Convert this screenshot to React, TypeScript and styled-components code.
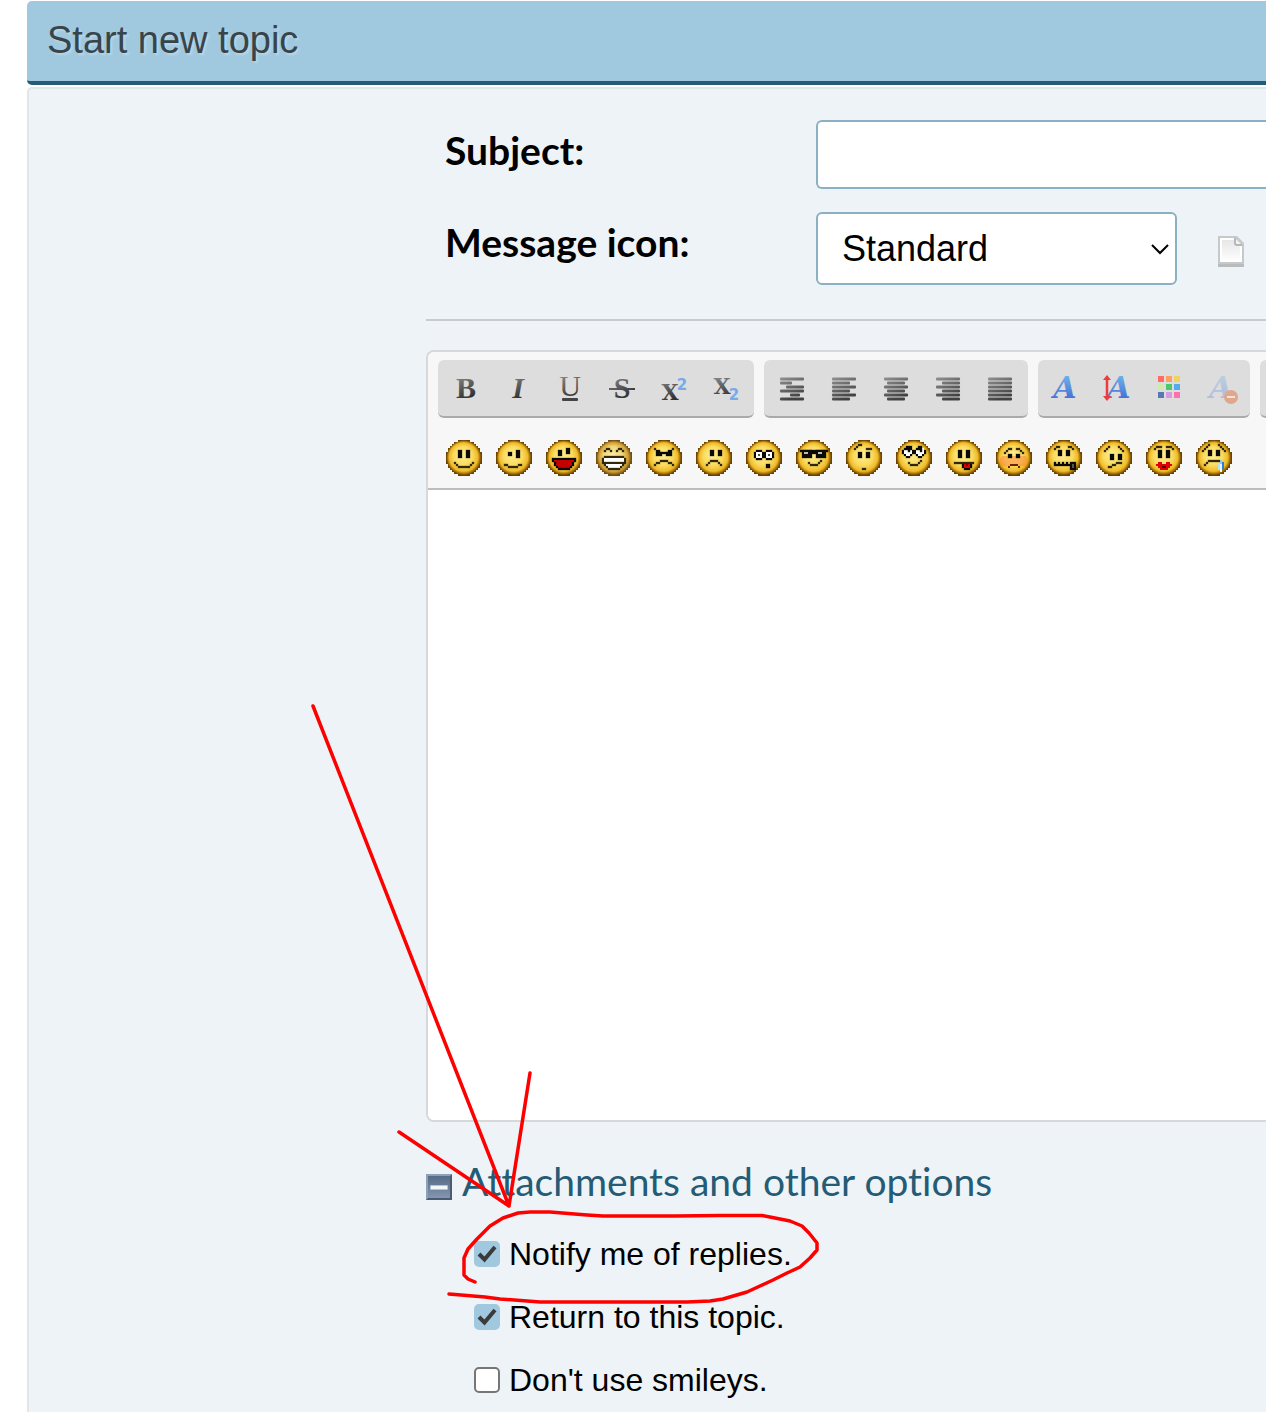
import React from "react";
import styled, { createGlobalStyle } from "styled-components";

const sans = `"Liberation Sans", Arial, sans-serif`;
const rounded = `Lato, "Open Sans", sans-serif`;

const GlobalStyle = createGlobalStyle`
  *, *::before, *::after { box-sizing: border-box; }
  body { margin: 0; background: #fff; color: #000; font-family: ${sans}; }
`;

const Page = styled.main`
  position: relative;
  display: flex;
  flex-direction: column;
  min-height: 100vh;
  padding: 1px 0 0 27px;
  overflow: hidden;
`;

const TitleBar = styled.header`
  padding: 14px 20px 16px;
  background: #a0c9df;
  border-bottom: 4px solid #245b75;
  border-radius: 5px 0 0 5px;
`;

const Title = styled.h1`
  margin: 0;
  font-size: 38px;
  font-weight: 400;
  line-height: 50px;
  color: #39444a;
  text-shadow: 2px 2px 2px rgba(255, 255, 255, 0.25);
`;

const Panel = styled.form`
  flex: 1;
  margin-top: 2px;
  padding: 31px 0 0 397px;
  background: #edf3f6;
  border: 2px solid #dfe7eb;
  border-width: 2px 0 0 2px;
  border-radius: 5px 0 0 0;
`;

const Fields = styled.div`
  display: grid;
  grid-template-columns: 371px 1fr;
  row-gap: 23px;
  padding-left: 19px;
`;

const FieldLabel = styled.label`
  font: 700 39px/60px ${rounded};
  font-variant-ligatures: none;
`;

const SubjectInput = styled.input`
  width: 100%;
  height: 69px;
  padding: 0 24px;
  font: 36px ${sans};
  background: #fff;
  border: 2px solid #8bb0c4;
  border-right: 0;
  border-radius: 6px 0 0 6px;
`;

const IconChoice = styled.div`
  display: flex;
  align-items: center;
  gap: 40px;

  > svg { margin-top: 4px; }
`;

const SelectBox = styled.div`
  display: grid;
  width: 361px;
  align-items: center;

  > * { grid-area: 1 / 1; }
  > svg { justify-self: end; margin-right: 7px; pointer-events: none; }
`;

const Select = styled.select`
  appearance: none;
  width: 100%;
  height: 73px;
  padding: 0 24px;
  font: 36px ${sans};
  color: #000;
  background: #fff;
  border: 2px solid #8bb0c4;
  border-radius: 6px;
`;

const Divider = styled.hr`
  height: 2px;
  margin: 34px 0 29px;
  border: 0;
  background: #c9cbcc;
`;

const Editor = styled.section`
  background: #fff;
  border: 2px solid #d6d8d9;
  border-right: 0;
  border-radius: 8px 0 0 8px;
  overflow: hidden;
`;

const Toolbar = styled.div`
  padding: 8px 0 12px 10px;
  background: #f7f7f7;
  border-bottom: 2px solid #bdbdbd;
`;

const ButtonGroups = styled.div`
  display: flex;
  gap: 10px;
  margin-bottom: 22px;
`;

const ButtonGroup = styled.div`
  display: flex;
  flex: none;
  min-width: 56px;
  height: 58px;
  padding: 0 2px;
  background: #ddd;
  border-bottom: 2px solid #aaa;
  border-radius: 6px;
`;

const ToolButton = styled.button`
  display: grid;
  place-items: center;
  width: 52px;
  height: 56px;
  padding: 0;
  border: 0;
  background: none;
`;

const Smileys = styled.div`
  display: flex;
  gap: 14px;
  padding-left: 8px;
`;

const SmileyButton = styled.button`
  display: block;
  width: 36px;
  height: 36px;
  padding: 0;
  border: 0;
  background: none;
`;

const Message = styled.textarea`
  display: block;
  width: 100%;
  height: 630px;
  padding: 12px;
  border: 0;
  outline: 0;
  resize: none;
  font: 32px ${sans};
  background: #fff;
`;

const OptionsHeading = styled.h2`
  display: flex;
  align-items: flex-end;
  gap: 10px;
  margin: 34px 0 17px;
  font: 400 39px/50px ${rounded};
  font-variant-ligatures: none;

  svg { flex: none; margin-bottom: 6px; }
`;

const OptionsLink = styled.a`
  color: #245b75;
  text-decoration: none;
`;

const Options = styled.div`
  padding-left: 48px;
`;

const Option = styled.label`
  display: flex;
  align-items: center;
  gap: 9px;
  height: 63px;
  font-size: 32px;
`;

const Tick = styled.span`
  display: grid;
  margin-bottom: 2px;

  > * { grid-area: 1 / 1; }
  > svg { pointer-events: none; visibility: hidden; }
  > input:checked + svg { visibility: visible; }
`;

const Checkbox = styled.input`
  appearance: none;
  width: 26px;
  height: 26px;
  margin: 0;
  background: #fff;
  border: 2px solid #767676;
  border-radius: 5px;

  &:checked { background: #a0c9df; border-color: #a0c9df; }
`;

const Annotation = styled.svg`
  position: absolute;
  top: 0;
  left: 0;
  pointer-events: none;
`;

/* ---------- smileys: 18 x 18 pixel art ---------- */

// column, row, width, height, colour (near-black when left out)
type Px = [number, number, number, number, string?];

const INK = "#0c0a04";
const LINE = "#33270a";

const smile: Px[] = [[4, 11, 1, 1, LINE], [13, 11, 1, 1, LINE], [5, 12, 1, 1, LINE], [12, 12, 1, 1, LINE], [6, 13, 6, 1, LINE]];
const grin: Px[] = [[6, 11, 1, 1, LINE], [7, 12, 4, 1, LINE], [11, 11, 1, 1, LINE], [12, 10, 1, 1, LINE]];
const eyes = (x: number, y: number, h: number): Px[] => [[x, y, 2, h], [x + 4, y, 2, h]];

const smileys: { name: string; px: Px[]; blush?: boolean; pale?: boolean }[] = [
  { name: "Smiley", px: [...eyes(6, 5, 4), ...smile] },
  { name: "Wink", px: [[6, 6, 2, 2], [10, 5, 2, 4], [4, 12, 1, 1, LINE], [5, 12, 1, 1, LINE], [6, 13, 5, 1, LINE], [11, 12, 2, 1, LINE]] },
  { name: "Cheesy", px: [[6, 5, 2, 3], [10, 4, 2, 3], [3, 9, 12, 1], [3, 10, 1, 1], [14, 10, 1, 1], [4, 10, 10, 2, "#c40000"], [4, 11, 1, 2], [13, 11, 1, 2], [5, 12, 8, 2, "#c40000"], [5, 13, 1, 1], [12, 13, 1, 1], [6, 14, 6, 1]] },
  { name: "Grin", pale: true, px: [[4, 5, 1, 1, LINE], [5, 4, 2, 1, LINE], [7, 5, 1, 1, LINE], [10, 5, 1, 1, LINE], [11, 4, 2, 1, LINE], [13, 5, 1, 1, LINE], [4, 8, 10, 1, LINE], [3, 9, 1, 3, LINE], [14, 9, 1, 3, LINE], [4, 9, 10, 2, "#fff"], [4, 11, 10, 1, LINE], [4, 12, 1, 1, LINE], [13, 12, 1, 1, LINE], [5, 12, 8, 1, "#fff"], [5, 13, 1, 1, LINE], [12, 13, 1, 1, LINE], [6, 13, 6, 1, "#fff"], [6, 14, 6, 1, LINE]] },
  { name: "Angry", px: [[4, 4, 1, 1, LINE], [5, 5, 2, 1], [11, 5, 2, 1], [13, 4, 1, 1, LINE], [7, 6, 4, 1], [5, 6, 3, 2], [10, 6, 3, 2], [7, 10, 4, 1, LINE], [5, 11, 2, 1, LINE], [11, 11, 2, 1, LINE], [4, 12, 1, 1, LINE], [13, 12, 1, 1, LINE]] },
  { name: "Sad", px: [...eyes(7, 5, 3), [7, 10, 4, 1, LINE], [6, 11, 1, 1, LINE], [11, 11, 1, 1, LINE], [5, 12, 1, 1, LINE], [12, 12, 1, 1, LINE]] },
  { name: "Shocked", px: [[5, 5, 3, 1], [4, 6, 1, 3], [5, 9, 3, 1], [8, 6, 2, 3], [10, 5, 3, 1], [13, 6, 1, 3], [10, 9, 3, 1], [5, 6, 3, 3, "#fff"], [10, 6, 3, 3, "#fff"], [6, 7, 1, 1, "#555"], [11, 7, 1, 1, "#555"], [10, 12, 2, 2]] },
  { name: "Cool", px: [[2, 5, 14, 1], [3, 5, 5, 4], [10, 5, 5, 4], [8, 6, 2, 1], [4, 6, 2, 1, "#bbb"], [11, 6, 2, 1, "#bbb"], ...grin] },
  { name: "Huh?", px: [[4, 4, 1, 1, LINE], [5, 3, 1, 1, LINE], [6, 2, 2, 1, LINE], [10, 4, 3, 1, LINE], ...eyes(6, 6, 3), [8, 14, 2, 1, LINE]] },
  { name: "Roll Eyes", px: [[3, 5, 1, 2], [4, 7, 1, 1], [5, 8, 2, 1], [7, 7, 1, 1], [8, 5, 2, 2], [10, 7, 1, 1], [11, 8, 2, 1], [13, 7, 1, 1], [14, 5, 1, 2], [4, 4, 4, 3, "#fff"], [5, 7, 2, 1, "#fff"], [10, 4, 4, 3, "#fff"], [11, 7, 2, 1, "#fff"], [5, 3, 3, 2], [6, 5, 1, 1], [4, 4, 1, 1], [11, 3, 2, 2], [12, 5, 1, 1], [10, 4, 1, 1], ...grin] },
  { name: "Tongue", px: [...eyes(6, 5, 4), [4, 11, 10, 1, LINE], [8, 12, 5, 2], [9, 14, 3, 1], [9, 12, 3, 2, "#d80000"], [10, 12, 1, 1, "#700"]] },
  { name: "Embarrassed", blush: true, px: [[4, 6, 1, 1, LINE], [5, 5, 1, 1, LINE], [6, 4, 2, 1, LINE], [10, 4, 2, 1, LINE], [12, 5, 1, 1, LINE], [13, 6, 1, 1, LINE], ...eyes(6, 7, 2), [7, 12, 4, 1, "#6b2408"], [6, 13, 1, 1, "#6b2408"], [11, 13, 1, 1, "#6b2408"]] },
  { name: "Lips Sealed", px: [[4, 4, 1, 1, LINE], [5, 3, 2, 1, LINE], [11, 3, 2, 1, LINE], [13, 4, 1, 1, LINE], ...eyes(6, 5, 3), [4, 11, 1, 1], [6, 11, 1, 1], [8, 11, 1, 1], [10, 11, 1, 1], [4, 12, 9, 1], [12, 11, 3, 4], [13, 12, 1, 2, "#555"]] },
  { name: "Undecided", px: [[4, 5, 1, 1, LINE], [5, 4, 1, 1, LINE], [6, 3, 1, 1, LINE], [11, 3, 1, 1, LINE], [12, 4, 1, 1, LINE], [13, 5, 1, 1, LINE], ...eyes(7, 7, 3), [6, 13, 2, 1, LINE], [8, 12, 2, 1, LINE], [10, 11, 3, 1, LINE]] },
  { name: "Kiss", px: [[5, 3, 3, 1, LINE], [4, 4, 1, 1, LINE], [10, 3, 3, 1, LINE], [13, 4, 1, 1, LINE], ...eyes(6, 5, 4), [6, 11, 2, 1, "#e00000"], [10, 11, 2, 1, "#e00000"], [5, 12, 8, 1, "#e00000"], [6, 13, 6, 1, "#e00000"], [8, 13, 2, 1, "#500"], [7, 14, 4, 1, "#e00000"]] },
  { name: "Cry", px: [[3, 5, 1, 1, LINE], [4, 4, 1, 1, LINE], [5, 3, 1, 1, LINE], [6, 2, 1, 1, LINE], [11, 2, 1, 1, LINE], [12, 3, 1, 1, LINE], [13, 4, 1, 1, LINE], [14, 5, 1, 1, LINE], ...eyes(6, 5, 3), [6, 10, 6, 1, LINE], [5, 11, 1, 1, LINE], [4, 12, 1, 1, LINE], [12, 10, 1, 2, "#8cc8f4"], [11, 12, 1, 3, "#b8e0fa"], [12, 12, 1, 4, "#e8f6ff"], [13, 11, 1, 4, "#2a7fd8"]] },
];

// first column of the disc for each of its nine upper rows; the lower half mirrors it
const insets = [6, 4, 3, 2, 1, 1, 0, 0, 0];
const discRows = [...insets, ...[...insets].reverse()];
const discPath = discRows.map((x, y) => `M${x} ${y}h${18 - 2 * x}v1h-${18 - 2 * x}z`).join("");

const Smiley = ({ px, blush, pale }: { px: Px[]; blush?: boolean; pale?: boolean }) => (
  <svg width="36" height="36" viewBox="0 0 18 18" shapeRendering="crispEdges" aria-hidden="true">
    <path d={discPath} fill={pale ? "url(#facePale)" : "url(#face)"} />
    {blush && <rect x="2" y="8" width="14" height="5" rx="2" fill="#ff7a3c" opacity="0.45" />}
    {px.map(([x, y, w, h, c], i) => (
      <rect key={i} x={x} y={y} width={w} height={h} fill={c ?? INK} stroke={c && c !== LINE ? "none" : c ?? INK} strokeWidth="0.3" strokeOpacity="0.5" shapeRendering="auto" />
    ))}
  </svg>
);

const Gradients = () => (
  <svg width="0" height="0" style={{ position: "absolute" }} aria-hidden="true">
    <defs>
      <radialGradient id="face" gradientUnits="userSpaceOnUse" cx="9" cy="9" r="9.4" fx="8" fy="7">
        <stop offset="0" stopColor="#ffee94" />
        <stop offset="0.5" stopColor="#fadb60" />
        <stop offset="0.76" stopColor="#eebb28" />
        <stop offset="0.85" stopColor="#b07a0c" />
        <stop offset="0.93" stopColor="#6a4300" />
      </radialGradient>
      <radialGradient id="facePale" gradientUnits="userSpaceOnUse" cx="9" cy="9" r="9.4" fx="8" fy="7">
        <stop offset="0" stopColor="#fbeaa6" />
        <stop offset="0.5" stopColor="#f3d878" />
        <stop offset="0.78" stopColor="#cf9f36" />
        <stop offset="0.93" stopColor="#714d12" />
      </radialGradient>
      <linearGradient id="ink" gradientUnits="userSpaceOnUse" x1="4" y1="5" x2="14" y2="28">
        <stop offset="0" stopColor="#8a8a8a" />
        <stop offset="1" stopColor="#303030" />
      </linearGradient>
      <linearGradient id="blue" gradientUnits="userSpaceOnUse" x1="0" y1="4" x2="0" y2="27">
        <stop offset="0" stopColor="#6cb0e8" />
        <stop offset="1" stopColor="#466fd6" />
      </linearGradient>
    </defs>
  </svg>
);

/* ---------- toolbar icons: 32 x 32 drawing with a 6 unit margin ---------- */

const Glyph = styled.text<{ $size: number; $bold?: boolean; $italic?: boolean; $fill?: string; $wide?: boolean; $plain?: boolean }>`
  font-family: ${(p) =>
    p.$plain ? `"DejaVu Sans", sans-serif` : p.$wide ? `"DejaVu Serif", serif` : `"Liberation Serif", "Times New Roman", serif`};
  font-size: ${(p) => p.$size}px;
  font-weight: ${(p) => (p.$bold ? 700 : 400)};
  font-style: ${(p) => (p.$italic ? "italic" : "normal")};
  fill: ${(p) => p.$fill ?? "url(#ink)"};
  text-anchor: middle;
`;

const BlueA = ({ x }: { x: number }) => (
  <Glyph x={x} y="26" $size={30} $bold $italic $wide $fill="url(#blue)">A</Glyph>
);

const Lines = ({ rows }: { rows: [number, number][] }) => (
  <>
    {rows.map(([from, to], i) => (
      <rect key={i} x={4 + from} y={5.5 + i * 4} width={to - from} height="3" rx="1" fill="url(#ink)" opacity="0.9" />
    ))}
  </>
);

const full: [number, number] = [0, 24];
const palette = ["#ff6c66", "#ff9f62", "#f0d35c", "#cdeab0", "#4ac96c", "#56aaee", "#5879b2", "#d59ce2", "#ff70ae"];

const groups: { name: string; icon: React.ReactNode }[][] = [
  [
    { name: "Bold", icon: <Glyph x="16" y="26" $size={30} $bold>B</Glyph> },
    { name: "Italic", icon: <Glyph x="16" y="26" $size={30} $bold $italic>I</Glyph> },
    { name: "Underline", icon: <><Glyph x="16" y="24" $size={30}>U</Glyph><rect x="8" y="26" width="16" height="3" rx="1" fill="#444" /></> },
    { name: "Strikethrough", icon: <><Glyph x="16" y="26" $size={30} $bold>S</Glyph><rect x="3" y="16" width="26" height="2" fill="url(#ink)" /></> },
    { name: "Superscript", icon: <><Glyph x="12" y="28" $size={22} $bold $wide>X</Glyph><Glyph x="24" y="18" $size={15} $bold $plain $fill="#7aa9ea">2</Glyph></> },
    { name: "Subscript", icon: <><Glyph x="12" y="22" $size={22} $bold $wide>X</Glyph><Glyph x="24" y="28" $size={15} $bold $plain $fill="#7aa9ea">2</Glyph></> },
  ],
  [
    { name: "Preformatted text", icon: <Lines rows={[full, [0, 12], [6, 24], full, [10, 20], full]} /> },
    { name: "Left align", icon: <Lines rows={[full, [0, 18], full, [0, 18], full, [0, 18]]} /> },
    { name: "Centered", icon: <Lines rows={[full, [3, 21], full, [3, 21], full, [3, 21]]} /> },
    { name: "Right align", icon: <Lines rows={[full, [6, 24], full, [6, 24], full, [6, 24]]} /> },
    { name: "Justify", icon: <Lines rows={[full, full, full, full, full, full]} /> },
  ],
  [
    { name: "Font name", icon: <BlueA x={15} /> },
    {
      name: "Font size",
      icon: (
        <>
          <BlueA x={17} />
          <path d="M5 6v20" stroke="#ee3b3b" strokeWidth="2.5" />
          <path d="M1 8l4-5 4 5zM1 24l4 5 4-5z" fill="#ee3b3b" />
        </>
      ),
    },
    {
      name: "Font color",
      icon: palette.map((c, i) => <rect key={c} x={4 + (i % 3) * 8} y={4 + Math.floor(i / 3) * 8} width="6" height="6" fill={c} />),
    },
    {
      name: "Remove formatting",
      icon: (
        <>
          <g opacity="0.3"><BlueA x={15} /></g>
          <circle cx="25" cy="25" r="7" fill="#dfa88d" />
          <rect x="21" y="24" width="8" height="2" fill="#f6e4da" />
        </>
      ),
    },
  ],
];

const PageIcon = () => (
  <svg width="28" height="34" viewBox="0 0 28 34" role="img" aria-label="Standard message icon">
    <defs>
      <linearGradient id="sheet" x1="0" y1="0" x2="0" y2="1">
        <stop offset="0" stopColor="#e6e6e6" />
        <stop offset="1" stopColor="#fdfdfd" />
      </linearGradient>
    </defs>
    <path d="M1 3h19l7 8v22H1z" fill="#b9bcbd" />
    <path d="M1 2h19l7 7v21H1z" fill="#c6c9ca" />
    <path d="M3 4h16l6 6v18H3z" fill="#fff" />
    <path d="M5 6h12l6 7v13H5z" fill="url(#sheet)" />
    <path d="M17 4h2l6 6v2h-5q-3 0-3-3z" fill="#b4b7b8" />
    <path d="M19 5l5 5h-4q-1 0-1-1z" fill="#f4f4f4" />
  </svg>
);

const CollapseIcon = () => (
  <svg width="26" height="26" viewBox="0 0 26 26" aria-hidden="true">
    <defs>
      <linearGradient id="tile" x1="0" y1="0" x2="0" y2="1">
        <stop offset="0" stopColor="#566b85" />
        <stop offset="1" stopColor="#8496b0" />
      </linearGradient>
    </defs>
    <rect width="26" height="26" fill="#8fa0b6" />
    <path d="M26 0v26H0l2-2h22V2z" fill="#4a5a70" />
    <rect x="2" y="2" width="22" height="22" fill="url(#tile)" />
    <rect x="4" y="11" width="18" height="5" rx="1" fill="#b4c4d8" />
    <rect x="5" y="12" width="16" height="3" fill="#f2f7fc" />
  </svg>
);

const CheckMark = () => (
  <svg width="26" height="26" viewBox="0 0 26 26" aria-hidden="true">
    <path d="M5 13l5.500 5.500L21 6" fill="none" stroke="#3b3b3b" strokeWidth="4" />
  </svg>
);

const options = [
  { id: "notify", label: "Notify me of replies.", on: true },
  { id: "return", label: "Return to this topic.", on: true },
  { id: "nosmileys", label: "Don't use smileys.", on: false },
];

export default function App() {
  return (
    <Page>
      <GlobalStyle />
      <Gradients />
      <TitleBar>
        <Title>Start new topic</Title>
      </TitleBar>
      <Panel onSubmit={(e) => e.preventDefault()}>
        <Fields>
          <FieldLabel htmlFor="subject">Subject:</FieldLabel>
          <SubjectInput id="subject" type="text" />
          <FieldLabel htmlFor="icon">Message icon:</FieldLabel>
          <IconChoice>
            <SelectBox>
              <Select id="icon" defaultValue="Standard">
                <option>Standard</option>
              </Select>
              <svg width="20" height="12" viewBox="0 0 20 12" aria-hidden="true">
                <path d="M2 2l8 8 8-8" fill="none" stroke="#000" strokeWidth="2" />
              </svg>
            </SelectBox>
            <PageIcon />
          </IconChoice>
        </Fields>
        <Divider />
        <Editor>
          <Toolbar>
            <ButtonGroups>
              {groups.map((group, g) => (
                <ButtonGroup key={g}>
                  {group.map((tool) => (
                    <ToolButton key={tool.name} type="button" aria-label={tool.name}>
                      <svg width="44" height="44" viewBox="-6 -6 44 44" aria-hidden="true">{tool.icon}</svg>
                    </ToolButton>
                  ))}
                </ButtonGroup>
              ))}
              <ButtonGroup />
            </ButtonGroups>
            <Smileys>
              {smileys.map((s) => (
                <SmileyButton key={s.name} type="button" aria-label={s.name}>
                  <Smiley px={s.px} blush={s.blush} pale={s.pale} />
                </SmileyButton>
              ))}
            </Smileys>
          </Toolbar>
          <Message aria-label="Message" />
        </Editor>
        <OptionsHeading>
          <CollapseIcon />
          <OptionsLink href="#options">Attachments and other options</OptionsLink>
        </OptionsHeading>
        <Options id="options">
          {options.map((o) => (
            <Option key={o.id} htmlFor={o.id}>
              <Tick>
                <Checkbox id={o.id} type="checkbox" defaultChecked={o.on} />
                <CheckMark />
              </Tick>
              {o.label}
            </Option>
          ))}
        </Options>
      </Panel>
      <Annotation width="830" height="1320" viewBox="0 0 830 1320" fill="none" stroke="#f00" strokeWidth="3.500" strokeLinecap="round" strokeLinejoin="round" aria-hidden="true">
        <path d="M313 706L509 1206M399 1132L509 1206M530 1073L509 1206" />
        <path d="M475 1282L468 1279 464 1275V1258L468 1249 477 1239 490 1226 503 1218 518 1213 530 1212H550L587 1215 603 1216H675L720 1215.500H762L775 1218 790 1221 802 1226 809 1233 817 1243V1250L810 1258 800 1267 787 1273 773 1280 747 1292 723 1299 710 1301 687 1302H540L500 1299 485 1297 449 1294" />
      </Annotation>
    </Page>
  );
}
